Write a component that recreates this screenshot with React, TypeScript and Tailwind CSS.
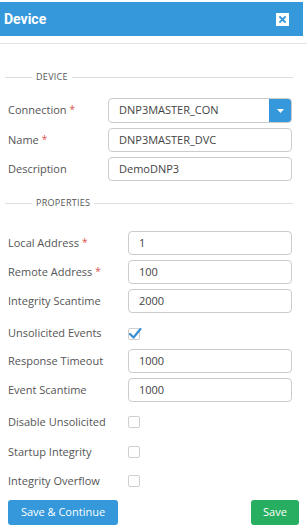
import React from "react";

const Req = () => <span className="text-[#d9534f] ml-[3px] text-[10px] align-top">*</span>;

const Legend = ({ text }: { text: string }) => (
  <div className="flex items-center h-[14px] pl-[5px] pr-[14px]">
    <div className="w-[27px] h-px bg-[#dddddd]" />
    <div className="px-[4px] text-[9px] leading-[14px] text-[#555] tracking-[0.3px]">{text}</div>
    <div className="flex-1 h-px bg-[#dddddd]" />
  </div>
);

const Input = ({ value }: { value: string }) => (
  <div className="flex-1 h-[24px] border border-[#cccccc] rounded-[4px] flex items-center pl-[10px] text-[11px] text-[#444] bg-white">
    {value}
  </div>
);

const Row = ({ label, req, value, lw, cls }: { label: string; req?: boolean; value: string; lw: string; cls: string }) => (
  <div className={`flex items-center h-[24px] pl-[8px] pr-[15px] ${cls}`}>
    <div className={`${lw} shrink-0 text-[11px] text-[#555]`}>
      {label}
      {req && <Req />}
    </div>
    <Input value={value} />
  </div>
);

const Check = ({ label, checked, cls }: { label: string; checked?: boolean; cls: string }) => (
  <div className={`flex items-center pl-[8px] ${cls}`}>
    <div className="w-[120px] shrink-0 text-[11px] text-[#555]">{label}</div>
    <div className="relative w-[12px] h-[12px] border border-[#cfcfcf] rounded-[2px] bg-white">
      {checked && (
        <svg className="absolute -left-[1px] -top-[2px]" width="14" height="13" viewBox="0 0 14 13">
          <path d="M2 7 L5.5 10.5 L12.5 2" fill="none" stroke="#3a8fd0" strokeWidth="2.2" strokeLinecap="round" strokeLinejoin="round" />
        </svg>
      )}
    </div>
  </div>
);

export default function App() {
  return (
    <div className="w-[307px] h-[532px] bg-white overflow-hidden" style={{ fontFamily: '"Open Sans", "Noto Sans", sans-serif' }}>
      <div className="pt-[2px]">
        <div className="w-[303px] h-[34px] bg-[#3498db] flex items-center justify-between pl-[4px] pr-[14px]">
          <div className="text-white font-bold text-[14px]" style={{ fontFamily: 'Roboto, "Liberation Sans", sans-serif' }}>Device</div>
          <div className="w-[13px] h-[13px] bg-white flex items-center justify-center">
            <svg width="7" height="7" viewBox="0 0 7 7">
              <path d="M1 1 L6 6 M6 1 L1 6" stroke="#3498db" strokeWidth="1.8" strokeLinecap="square" />
            </svg>
          </div>
        </div>
      </div>
      <div className="mt-[7px] h-px bg-[#e3e3e3]" />
      <div className="mt-[26px]">
        <Legend text="DEVICE" />
      </div>
      <div className="mt-[14px] flex items-center pl-[8px] pr-[15px] h-[25px]">
        <div className="w-[100px] shrink-0 text-[11px] text-[#555]">
          Connection<Req />
        </div>
        <div className="flex-1 h-[25px] border border-[#cccccc] rounded-[4px] flex items-center bg-white overflow-hidden">
          <div className="flex-1 pl-[10px] text-[11px] text-[#444]">DNP3MASTER_CON</div>
          <div className="w-[23px] h-[25px] -mr-px bg-[#3498db] rounded-r-[4px] flex items-center justify-center">
            <svg width="7" height="4" viewBox="0 0 7 4"><path d="M0 0 L7 0 L3.5 4 Z" fill="white" /></svg>
          </div>
        </div>
      </div>
      <Row label="Name" req value="DNP3MASTER_DVC" lw="w-[100px]" cls="mt-[5px]" />
      <Row label="Description" value="DemoDNP3" lw="w-[100px]" cls="mt-[5px]" />
      <div className="mt-[15px]">
        <Legend text="PROPERTIES" />
      </div>
      <Row label="Local Address" req value="1" lw="w-[120px]" cls="mt-[21px]" />
      <Row label="Remote Address" req value="100" lw="w-[120px]" cls="mt-[5px]" />
      <Row label="Integrity Scantime" value="2000" lw="w-[120px]" cls="mt-[5px]" />
      <Check label="Unsolicited Events" checked cls="mt-[5px] h-[31px]" />
      <Row label="Response Timeout" value="1000" lw="w-[120px]" cls="" />
      <Row label="Event Scantime" value="1000" lw="w-[120px]" cls="mt-[5px]" />
      <Check label="Disable Unsolicited" cls="mt-[5px] h-[30px]" />
      <Check label="Startup Integrity" cls="h-[30px]" />
      <Check label="Integrity Overflow" cls="h-[28px]" />
      <div className="mt-[5px] flex items-center justify-between pl-[8px] pr-[8px]">
        <div className="w-[110px] h-[25px] bg-[#3498db] rounded-[3px] text-white text-[11px] flex items-center justify-center">Save &amp; Continue</div>
        <div className="w-[48px] h-[25px] bg-[#27ae60] rounded-[3px] text-white text-[11px] flex items-center justify-center">Save</div>
      </div>
    </div>
  );
}
